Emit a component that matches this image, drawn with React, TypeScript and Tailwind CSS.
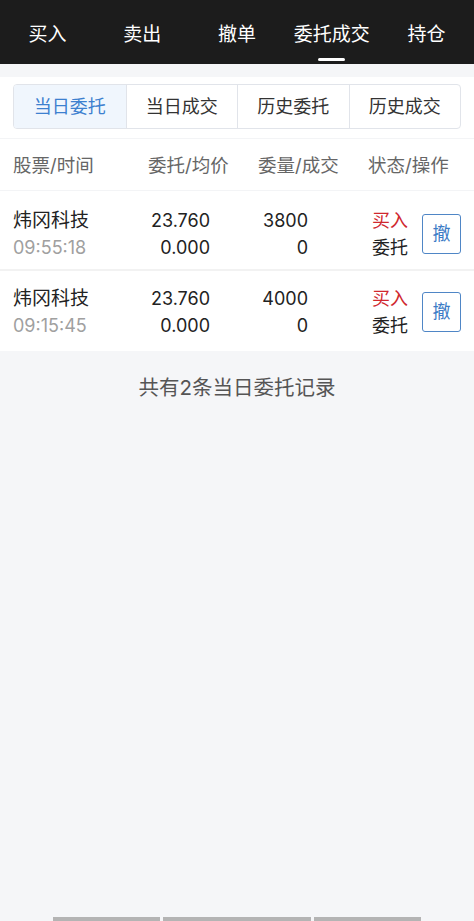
import React from 'react';

const topTabs = ['买入', '卖出', '撤单', '委托成交', '持仓'];
const segments = ['当日委托', '当日成交', '历史委托', '历史成交'];

const orders = [
  { name: '炜冈科技', time: '09:55:18', price: '23.760', avg: '0.000', qty: '3800', done: '0' },
  { name: '炜冈科技', time: '09:15:45', price: '23.760', avg: '0.000', qty: '4000', done: '0' },
];

export default function App() {
  return (
    <div
      className="w-[474px] h-[921px] flex flex-col bg-[#f5f6f8] overflow-hidden"
      style={{ fontFamily: '"Inter", "Noto Sans CJK SC", sans-serif' }}
    >
      {/* Top nav */}
      <div className="h-[64px] bg-[#1c1c1c] grid grid-cols-5 shrink-0">
        {topTabs.map((t, i) => (
          <div key={t} className="flex flex-col items-center justify-end">
            <span className="text-[19px] leading-none text-white">{t}</span>
            <span className={`mt-[14px] mb-[3px] h-[3px] w-[27px] rounded-full ${i === 3 ? 'bg-white' : 'bg-transparent'}`} />
          </div>
        ))}
      </div>

      <div className="h-[13px] shrink-0" />

      {/* Segmented control */}
      <div className="bg-white px-[13px] pt-[7px] pb-[9px]">
        <div className="grid grid-cols-4 h-[45px] border border-[#e1e4ea] rounded-[4px] overflow-hidden">
          {segments.map((s, i) => (
            <div
              key={s}
              className={`flex items-center justify-center text-[18px] ${
                i === 0 ? 'bg-[#f0f6fd] text-[#3d80cf]' : 'text-[#333] border-l border-[#e1e4ea]'
              }`}
            >
              {s}
            </div>
          ))}
        </div>
      </div>

      {/* Table */}
      <div className="bg-white border-t border-[#f3f4f6]">
        <div className="flex h-[52px] items-center pt-[3px] px-[13px] text-[18.5px] text-[#666] border-b border-[#f3f4f6]">
          <span className="w-[135px]">股票/时间</span>
          <span className="w-[110px]">委托/均价</span>
          <span className="w-[110px]">委量/成交</span>
          <span>状态/操作</span>
        </div>
        {orders.map((o, i) => (
          <div
            key={o.time}
            className={`flex items-center h-[80px] px-[13px] text-[18px] leading-[27px] ${
              i === 0 ? 'pt-[7px] border-b-2 border-[#f2f2f2]' : 'pt-[1px]'
            }`}
          >
            <div className="w-[110px] flex flex-col">
              <span className="text-[#222] text-[19px]">{o.name}</span>
              <span className="text-[#a0a0a0]">{o.time}</span>
            </div>
            <div className="w-[87px] flex flex-col items-end text-[#222]">
              <span>{o.price}</span>
              <span>{o.avg}</span>
            </div>
            <div className="w-[98px] flex flex-col items-end text-[#222]">
              <span>{o.qty}</span>
              <span>{o.done}</span>
            </div>
            <div className="ml-[64px] flex flex-col">
              <span className="text-[#d0282e]">买入</span>
              <span className="text-[#222]">委托</span>
            </div>
            <button className="ml-[14px] w-[39px] h-[40px] border border-[#4f86c6] rounded-[3px] text-[#3d7cc6] text-[18px] flex items-center justify-center">
              撤
            </button>
          </div>
        ))}
      </div>

      <div className="text-center text-[20.5px] text-[#555] mt-[22px]">共有2条当日委托记录</div>

      <div className="flex-1" />

      {/* bottom bars */}
      <div className="flex h-[4px] shrink-0">
        <div className="ml-[53px] w-[107px] bg-[#b4b4b4]" />
        <div className="ml-[3px] w-[148px] bg-[#b4b4b4]" />
        <div className="ml-[3px] w-[107px] bg-[#b4b4b4]" />
      </div>
    </div>
  );
}
